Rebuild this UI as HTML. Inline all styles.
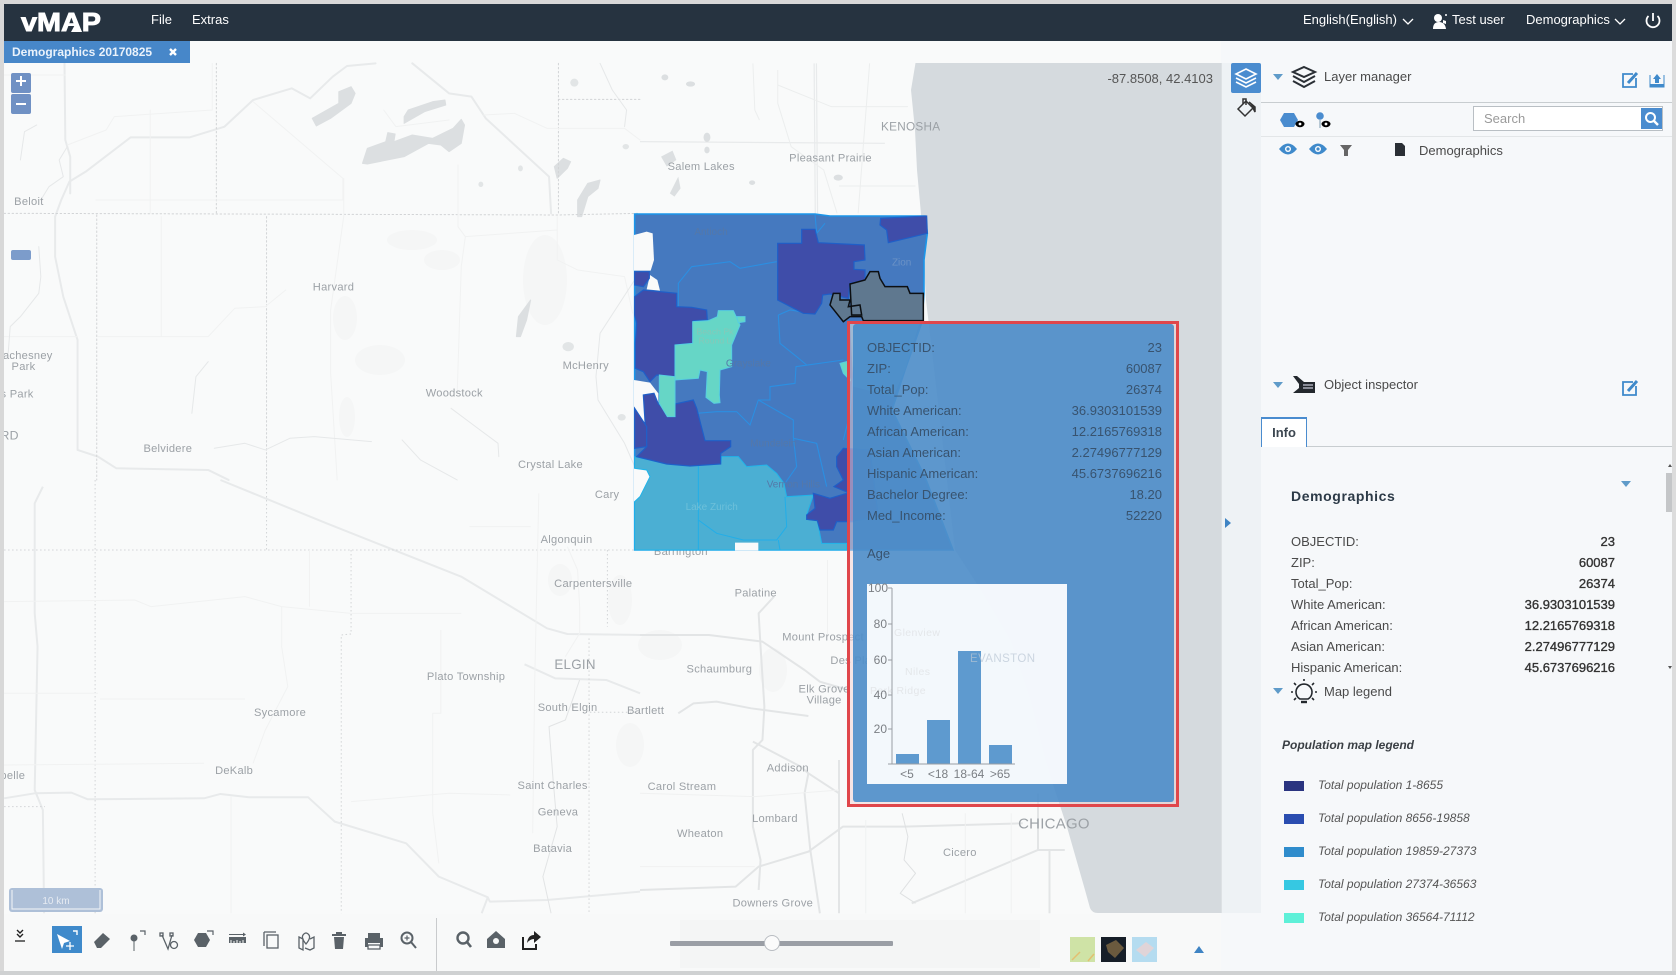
<!DOCTYPE html>
<html><head><meta charset="utf-8"><title>vMAP</title>
<style>
html,body{margin:0;padding:0;width:1676px;height:975px;overflow:hidden;background:#f6f8fa;font-family:"Liberation Sans",Arial,sans-serif;font-size:13px;color:#4a4a4a}
.a{position:absolute;white-space:nowrap;line-height:16px}
.r{position:absolute;display:flex;justify-content:space-between;line-height:16px;white-space:nowrap}
.pn .r{left:1291px;width:324px}
.pn b{font-weight:400;color:#333;-webkit-text-stroke:.35px #333}
.pp .r{left:867px;width:295px;color:#38536f}
.it{font-style:italic;font-size:12px;left:1318px;color:#555}
.sw{position:absolute;left:1284px;width:20px;height:10px}
#map .n path{vector-effect:non-scaling-stroke}
#map text{font-family:"Liberation Sans",Arial,sans-serif}
</style></head><body>
<svg id="map" width="1676" height="975" viewBox="0 0 1676 975" style="position:absolute;left:0;top:0">
<rect width="1676" height="975" fill="#f9fafa"/>
<!-- urban patches -->
<g fill="#f5f6f6">
<ellipse cx="345" cy="318" rx="12" ry="22"/><ellipse cx="347" cy="417" rx="8" ry="20"/><ellipse cx="412" cy="240" rx="25" ry="10"/><ellipse cx="545" cy="280" rx="22" ry="45"/><ellipse cx="442" cy="260" rx="18" ry="10"/><ellipse cx="380" cy="360" rx="25" ry="15"/>
<ellipse cx="620" cy="600" rx="12" ry="25"/><ellipse cx="560" cy="580" rx="12" ry="16"/><ellipse cx="630" cy="745" rx="14" ry="22"/>
<ellipse cx="773" cy="670" rx="14" ry="22"/><ellipse cx="660" cy="645" rx="22" ry="15"/>
</g>
<!-- lake -->
<path fill="#d5dade" d="M915.5,63 L911,90 L915,130 L917,170 L921,214 L926,300 L940,420 L955,550 L977,584 L1010,640 L1030,700 L1045,760 L1067,827 L1085,890 L1090,908 Q1092,913 1098,913 L1221,913 L1221,63 Z"/>
<!-- Z9 region -->
<g class="n" transform="translate(0,60) scale(.4082,.3333)" fill="none" stroke-linejoin="round" stroke-linecap="round">
<g fill="#dcdfe1" stroke="#dcdfe1" stroke-width="1">
<path d="M765,175 L830,130 L830,95 L860,80 L870,100 L860,130 L810,175 L775,198Z"/>
<path d="M990,170 L1000,150 L1060,125 L1090,120 L1092,135 L1040,155 L990,190Z"/>
<path d="M888,310 L900,265 L945,245 L950,218 L968,222 L965,245 L1010,225 L1060,235 L1110,205 L1130,178 L1138,195 L1130,250 L1100,275 L1080,255 L1050,250 L990,290 L900,312Z"/>
<path d="M1415,470 L1415,420 L1440,370 L1470,360 L1465,385 L1440,410 L1425,470Z"/>
<path d="M1358,320 L1380,295 L1398,305 L1390,325 L1365,355Z"/>
<path d="M1265,830 L1270,770 L1300,720 L1290,780 L1275,830Z"/>
</g>
<g fill="#e2e5e6"><ellipse cx="1407" cy="68" rx="10" ry="12"/><ellipse cx="1275" cy="325" rx="6" ry="9"/><ellipse cx="1178" cy="373" rx="6" ry="8"/><ellipse cx="1392" cy="860" rx="14" ry="14"/><ellipse cx="1533" cy="260" rx="8" ry="8"/><ellipse cx="1523" cy="1072" rx="10" ry="10"/></g>
<g stroke="#e8eaeb" stroke-width="2">
<path d="M920,10 L850,18 L815,50 L760,115 L715,85 L620,120 L550,200 L465,232 L320,232 L210,335 L170,365 L150,420 L135,470 L135,590 L155,710 L190,840 L190,1170 L240,1190 L285,1225 L510,1230 L560,1260"/>
<path d="M1010,10 L1100,100 L1155,110 L1190,175 L1345,350 L1350,460"/>
<path d="M158,10 L160,240 L172,290 L172,400"/>
</g>
<g stroke="#d2d4d6" stroke-width="1" stroke-dasharray="1.5 2.5">
<path d="M10,460 L1368,465 L1568,460"/><path d="M237,465 V1260"/><path d="M530,10 V465"/><path d="M653,470 V1260"/><path d="M1368,10 V460"/><path d="M1368,118 H1568"/><path d="M1558,470 V1000"/>
</g>
<g stroke="#f1f2f2" stroke-width="1">
<path d="M235,420 L840,420 L840,355 L620,125"/><path d="M368,150 V460"/><path d="M395,470 V830"/><path d="M842,355 V470 L810,750 V940 L826,1260"/><path d="M1122,315 V500 L1140,530 L1130,620 L1120,1000"/><path d="M1365,470 V600 L1415,630 L1530,650 L1550,760"/><path d="M240,830 H510 L575,745 L650,740 L700,690"/><path d="M1140,530 L1365,510"/><path d="M1185,165 L1260,160 L1340,205 H1530 L1568,240"/><path d="M10,45 H160"/><path d="M10,830 H190"/><path d="M940,150 L970,200 L1100,180"/><path d="M165,255 L260,210 L280,170 L520,150 V10"/>
</g>
<g stroke="#e6e8e9" stroke-width="1">
<path d="M1105,1045 L1165,1100 L1220,1150 L1222,1190"/><path d="M525,1165 L600,1150 L650,1170 L710,1135 L770,1130 L910,1145"/><path d="M470,1060 L480,950 L510,905"/><path d="M985,1140 L1030,1200 L1120,1260"/><path d="M50,300 L60,215 L90,195"/><path d="M165,260 L145,300 L155,350 L120,380 L100,420"/><path d="M95,560 L100,650 L95,700 L50,770 L25,800 L20,880"/><path d="M1460,950 L1465,1020 L1530,1150 L1555,1220"/><path d="M1470,10 L1500,90 L1535,150 L1530,200"/><path d="M1560,650 L1470,820 L1460,950"/>
</g>
</g>
<!-- Z10 region -->
<g class="n" transform="translate(0,480) scale(.4082,.3333)" fill="none" stroke-linejoin="round">
<g stroke="#e8eaeb" stroke-width="2">
<path d="M540,0 L800,130 L1130,290 L1340,445 L1390,462 L1568,465"/>
<path d="M105,20 L85,70 V400 L92,500 L85,930 L105,990 L108,1300"/>
<path d="M10,955 L85,940 L175,938 L215,958 L500,955 L540,942 L610,952 L755,952 L820,1025 L995,1090 L1075,1190 L1195,1252 L1200,1265 L1340,1260 L1568,1235"/>
<path d="M1285,553 L1360,595 L1485,600 L1568,640"/><path d="M1195,1252 L1180,1300"/>
</g>
<g stroke="#d2d4d6" stroke-width="1" stroke-dasharray="1.5 2.5">
<path d="M10,210 H1568"/><path d="M233,0 V1300"/><path d="M653,0 V210"/><path d="M860,210 V462 L836,465 V1300"/><path d="M1443,475 V1300"/><path d="M1488,210 V440"/><path d="M10,980 H110"/><path d="M1445,697 H1568"/>
</g>
<g stroke="#f1f2f2" stroke-width="1">
<path d="M690,380 V500 L705,620 L650,750 L620,850"/><path d="M245,657 H600"/><path d="M10,640 H240"/><path d="M10,365 L330,360 L370,380 L600,350 L690,380 L860,400 H1130"/><path d="M758,210 V380"/><path d="M860,965 L1100,940 L1250,945"/><path d="M10,855 L500,850"/><path d="M1080,450 V700 H1060 V1000 L1075,1150"/><path d="M566,950 V1300"/><path d="M1150,140 H1300"/><path d="M1320,40 L1310,600 L1305,1060"/><path d="M1390,200 L1415,270 L1420,380 L1420,460 L1385,530"/>
</g>
<path stroke="#e2e4e5" d="M1420,600 L1385,720 L1345,740 L1355,900 L1365,1040 L1330,1190 L1350,1300"/>
</g>
<!-- Z11 region -->
<g class="n" transform="translate(640,60) scale(.3827,.3333)" fill="none">
<g stroke="#e8eaeb" stroke-width="1.2"><path d="M455,10 L458,460"/><path d="M461,10 L464,460"/><path d="M0,245 L640,250"/></g>
<g stroke="#eceeee"><path d="M600,10 L570,460"/><path d="M295,10 L300,150 L312,180"/><path d="M360,30 V130 L395,260 L480,330 L515,460"/><path d="M360,75 L500,140 H700"/><path d="M520,378 H720"/></g>
<g fill="#dcdfe1"><path d="M55,290 L85,272 L95,300 L70,320Z"/><path d="M78,400 L100,350 L106,385 L90,410Z"/><ellipse cx="175" cy="232" rx="9" ry="14"/><ellipse cx="175" cy="270" rx="7" ry="10"/><ellipse cx="518" cy="353" rx="12" ry="9"/><ellipse cx="293" cy="368" rx="8" ry="7"/><ellipse cx="65" cy="52" rx="9" ry="9"/><ellipse cx="132" cy="72" rx="12" ry="8"/></g>
</g>
<!-- Z12 region -->
<g class="n" transform="translate(640,560) scale(.3827,.3333)" fill="none" stroke-linejoin="round">
<g stroke="#e3e5e6" stroke-width="2">
<path d="M0,225 L180,225 L320,245 L430,330 L470,365 L545,390"/>
<path d="M350,110 L310,160 L315,260 L325,440 L320,540 L295,570 V800 L315,900 L310,990"/>
<path d="M0,990 L250,980 L310,920 L440,875 L530,800 L690,800 L1000,790"/>
<path d="M520,600 V1060"/><path d="M440,640 L430,700 L445,870 L470,1060"/>
<path d="M295,545 L420,620 L440,640 L520,700"/>
<path d="M710,1030 L1040,870 H1110"/><path d="M1040,700 V870"/><path d="M1070,870 V1060"/>
<path d="M100,460 L140,430 L200,425 L290,445 L440,468"/>
</g>
<g stroke="#f0f1f1">
<path d="M0,700 L300,710 L520,690"/><path d="M0,920 L300,920"/><path d="M590,780 V1060"/><path d="M850,760 V1060"/><path d="M970,760 V1060"/><path d="M490,0 V230"/>
</g>
<path stroke="#dfe1e2" d="M685,760 L700,830 L690,900 L720,940 L680,1000 L720,1030"/>
</g>
<!-- map labels -->
<g transform="scale(1.0689)" font-size="10.4" fill="#9ca1a6" text-anchor="middle" letter-spacing=".25">
<text x="852" y="122" font-size="11">KENOSHA</text><text x="656" y="159">Salem Lakes</text><text x="777" y="151">Pleasant Prairie</text><text x="27" y="192">Beloit</text><text x="312" y="272">Harvard</text><text x="26" y="336">achesney</text><text x="22" y="346">Park</text><text x="16" y="372">s Park</text><text x="9" y="411" font-size="11.5">RD</text><text x="157" y="423">Belvidere</text><text x="548" y="345">McHenry</text><text x="425" y="371">Woodstock</text><text x="515" y="438">Crystal Lake</text><text x="568" y="466">Cary</text><text x="530" y="508">Algonquin</text><text x="555" y="549">Carpentersville</text><text x="707" y="558">Palatine</text><text x="770" y="599">Mount Prospect</text><text x="538" y="626" font-size="12.5">ELGIN</text><text x="436" y="636">Plato Township</text><text x="673" y="629">Schaumburg</text><text x="531" y="665">South Elgin</text><text x="604" y="668">Bartlett</text><text x="771" y="648">Elk Grove</text><text x="771" y="658">Village</text><text x="262" y="670">Sycamore</text><text x="219" y="724">DeKalb</text><text x="737" y="722">Addison</text><text x="517" y="738">Saint Charles</text><text x="638" y="739">Carol Stream</text><text x="522" y="763">Geneva</text><text x="725" y="769">Lombard</text><text x="655" y="783">Wheaton</text><text x="517" y="797">Batavia</text><text x="898" y="801">Cicero</text><text x="986" y="775" font-size="14">CHICAGO</text><text x="723" y="848">Downers Grove</text><text x="637" y="519">Barrington</text><text x="12" y="729">pelle</text><text x="806" y="621">Des Plaines</text>
</g>
<!-- choropleth -->
<g class="n" transform="translate(630,200) scale(.33333)">
<path fill="#4579bf" stroke="#1b96ea" stroke-width="1.6" d="M14,42 L555,42 L600,48 L885,48 L892,100 L882,180 L882,280 L876,366 L825,510 L786,630 L885,831 L969,1050 L14,1050Z"/>
<path fill="#4ba3d6" d="M660,365 L870,365 L825,510 L790,590 L670,560Z"/>
<!-- white notches under the dark polygons -->
<g fill="#f9fafa">
<path d="M12,105 L50,95 L68,100 L72,180 L62,212 H12Z"/><path d="M60,225 L82,240 L90,272 L50,268Z"/>
<path d="M12,540 L60,548 L85,580 V610 L85,650 L50,690 L12,620Z"/>
<path d="M12,805 L50,810 L60,830 L30,890 L12,905Z"/>
</g>
<!-- light -->
<path fill="#4bafd3" stroke="#20b4ea" stroke-width="1" d="M14,905 L30,890 L60,830 L50,810 L14,805 V770 L110,792 L180,798 L272,792 L275,770 L325,770 L350,800 L410,795 L440,820 L462,850 L470,890 L550,885 L530,945 L530,958 L562,962 L575,1030 L650,1030 V1050 H14Z"/>
<path fill="none" stroke="#22aee8" stroke-width="1" d="M205,795 V1050 M205,960 L260,1000 L340,1020 L440,1020 L470,980 L465,890 M450,1050 L445,1020"/>
<path fill="#f9fafa" d="M315,1028 H385 V1052 H315Z"/>
<!-- lines -->
<g fill="none" stroke="#2b8fe2" stroke-width="1.1">
<path d="M145,320 V250 L185,200 L300,185 L330,205 L440,185"/>
<path d="M200,640 L260,635 L320,635 L360,675 L385,600 H420 V560 L495,550 L498,500 L640,480"/>
<path d="M445,345 L480,330 L555,342 M445,345 L450,430 L500,470 L530,495"/>
<path d="M385,600 L490,660 V710 L500,800 L465,850"/><path d="M490,715 L560,730 L590,860"/><path d="M555,42 L560,100 L585,70"/>
<path d="M672,500 L660,640 L640,720"/>
</g>
<!-- dark -->
<g fill="#3f4da9" stroke="#1f5fc8" stroke-width="1.2">
<path d="M443,130 H515 V88 H555 L565,128 L703,135 L705,180 L672,185 V208 L705,210 V240 L660,250 L655,295 L600,282 L578,285 L575,310 L555,342 L520,340 L443,300Z"/>
<path d="M752,55 L890,48 L892,100 L850,110 L775,128 L770,90 L750,75Z"/>
<path d="M14,215 H58 V235 L40,260 L14,255Z"/>
<path d="M40,270 L140,280 V320 L185,322 L230,330 L232,360 L190,362 L188,430 L135,435 V530 L80,525 L60,545 L40,515 L16,505 V430 L20,370 L14,345 V290Z"/>
<path d="M40,585 L72,580 L85,612 L135,650 V612 L190,600 L200,625 L225,722 H302 V740 L272,760 V792 L180,798 L110,792 L20,770 L50,740 L48,710Z"/>
<path d="M14,625 L50,680 V740 L14,745Z"/>
<path d="M550,880 L600,895 L650,880 L670,880 V965 L620,965 L610,990 L570,990 L562,962 L530,958 V945 L555,925Z"/>
<path d="M620,770 L640,745 L720,750 L745,950 L660,965 L660,880 L612,860 L640,840 L620,800Z"/>
</g>
<!-- teal -->
<g fill="#66d6c6" stroke="#56cfe0" stroke-width="1">
<path d="M188,365 L235,362 L262,350 L265,332 H310 L330,375 L305,435 V500 L270,510 L268,585 L270,608 L252,610 L228,592 L232,515 L210,510 L205,535 L135,540 V435 L188,430Z"/>
<path d="M88,525 L135,530 V650 H112 L88,610Z"/>
<path d="M320,350 H345 V365 L325,368Z"/><path d="M630,490 L650,485 L660,540 L640,520Z"/>
</g>
<!-- selected -->
<path fill="#5f788f" stroke="#0c0f12" stroke-width="1.5" d="M660,252 L705,240 L720,215 H745 L750,235 L765,260 H832 L840,280 H880 V362 H700 L695,350 L660,350 L640,365 L600,315 L610,280 H630 V300 L660,300 L655,320 L690,315 L695,345 L665,345Z"/>
<!-- label on polygons -->
<g font-size="30" fill="#5578a8" text-anchor="middle" stroke="none">
<text x="243" y="105">Antioch</text><text x="815" y="197" fill="#6b92c6">Zion</text><text x="355" y="500">Grayslake</text><text x="430" y="740">Mundelein</text><text x="490" y="862">Vernon Hills</text><text x="245" y="930" fill="#6dc0da">Lake Zurich</text>
<text x="255" y="403" font-size="26" fill="#86c8b8">Beach Pk</text><text x="255" y="431" font-size="26" fill="#86c8b8">Round L</text>
</g>
</g>
<!-- toolbar background -->
<rect x="4" y="914" width="1218" height="58" fill="#f8f9f9"/>
<rect x="680" y="920" width="360" height="48" fill="#f4f5f5"/>
<!-- popup -->
<rect x="848.5" y="322.5" width="329" height="483" fill="#f4d0d0" opacity=".5"/>
<rect x="853" y="324" width="321" height="478" rx="3" fill="rgb(63,136,200)" fill-opacity=".84"/>
<rect x="848.5" y="322.5" width="329" height="483" fill="none" stroke="#e0464b" stroke-width="3"/>
<rect x="867" y="584" width="200" height="200" fill="#fff" fill-opacity=".93"/>
<g font-size="10.5" fill="#e4e7ea" letter-spacing=".4"><text x="894" y="636">Glenview</text><text x="905" y="675">Niles</text><text x="870" y="694">Park Ridge</text></g>
<g fill="#5e9acf"><rect x="896" y="754" width="23" height="10"/><rect x="927" y="720" width="23" height="44"/><rect x="958" y="651" width="23" height="113"/><rect x="989" y="745" width="23" height="19"/></g>
<text x="970" y="662" font-size="11.5" fill="#b9c6d4" fill-opacity=".7" letter-spacing=".4">EVANSTON</text>
<g stroke="#9a9ea3" fill="none"><path d="M892,588 V764 M888,764 H1015 M888,588 H892 M888,624 H892 M888,660 H892 M888,695 H892 M888,729 H892"/></g>
<g font-size="12" fill="#7b7f84" text-anchor="end"><text x="888" y="592">100</text><text x="887" y="628">80</text><text x="887" y="664">60</text><text x="887" y="699">40</text><text x="887" y="733">20</text></g>
<g font-size="12" fill="#7b7f84" text-anchor="middle"><text x="907" y="778">&lt;5</text><text x="938" y="778">&lt;18</text><text x="969" y="778">18-64</text><text x="1000" y="778">&gt;65</text></g>
<!-- strip & panel -->
<rect x="1221" y="41" width="455" height="931" fill="#f6f8fa"/>
<rect x="1221" y="63" width="40" height="850" fill="#eef2f5"/>
<rect x="1221" y="63" width="1" height="850" fill="#dde1e4"/>
<rect x="1231" y="63" width="30" height="30" rx="2" fill="#4a8ccf"/>
<g transform="translate(1246,78)" fill="none" stroke="#fff" stroke-width="1.6"><path d="M0,-9 L10,-4 L0,1 L-10,-4Z"/><path d="M-10,0 L0,5 L10,0"/><path d="M-10,4 L0,9 L10,4"/></g>
<!-- paint bucket -->
<g transform="translate(1246,108)" fill="none" stroke="#333" stroke-width="1.5"><path d="M-8,1 L0,-7 L7,0 L-1,8Z"/><path d="M-3,-4 V-9 H0 V-3"/><path d="M3,-6 L9,-1 L9,4 L7,0" fill="#333"/></g>
<rect x="1261" y="102" width="411" height="1" fill="#c8cdd0"/>
<rect x="1261" y="136" width="411" height="1" fill="#e3e6e8"/>
<rect x="1307" y="446" width="365" height="1" fill="#c8cdd0"/>
<!-- triangles -->
<g fill="#5f9bc9"><path d="M1273,74 H1283 L1278,80Z"/><path d="M1273,382 H1283 L1278,388Z"/><path d="M1273,688 H1283 L1278,694Z"/><path d="M1621,481 H1631 L1626,487Z"/></g>
<path d="M1225,518 L1231,523 L1225,528Z" fill="#3f84c4"/>
<!-- layers icon -->
<g transform="translate(1304,77)" fill="none" stroke="#2a2f35" stroke-width="2"><path d="M0,-10 L11,-5 L0,0 L-11,-5Z"/><path d="M-11,-1 L0,5 L11,-1"/><path d="M-11,4 L0,10 L11,4"/></g>
<!-- edit icons -->
<g transform="translate(1630,80)" fill="none" stroke="#3f8acb" stroke-width="1.8"><path d="M3,-6 H-7 V7 H6 V-2"/><path d="M-2,3 L7,-7" stroke-width="3"/></g>
<g transform="translate(1630,388)" fill="none" stroke="#3f8acb" stroke-width="1.8"><path d="M3,-6 H-7 V7 H6 V-2"/><path d="M-2,3 L7,-7" stroke-width="3"/></g>
<!-- upload -->
<g transform="translate(1657,80)"><path d="M-7,-5 V7 H7 V-5" fill="none" stroke="#3f8acb" stroke-width="1"/><path d="M0,-6 L4,-1 H2 V3 H-2 V-1 H-4Z" fill="#3f8acb"/><rect x="-7" y="4" width="14" height="3" fill="#3f8acb"/></g>
<!-- hex + eye -->
<path d="M1284,113 H1294 L1298,120 L1294,127 H1284 L1280,120Z" fill="#4a8ccf"/>
<g transform="translate(1300,124)"><ellipse rx="4.5" ry="3.2" fill="#000"/><circle r="1.4" fill="#fff"/></g>
<circle cx="1320" cy="116" r="3.8" fill="#4a8ccf"/><path d="M1320,120 V128" stroke="#7a9ab0" stroke-width="1"/>
<g transform="translate(1326,124)"><ellipse rx="4.5" ry="3.2" fill="#000"/><circle r="1.4" fill="#fff"/></g>
<!-- eyes -->
<g><g transform="translate(1288,149)"><path d="M-9,0 Q0,-11 9,0 Q0,11 -9,0Z" fill="#3f8acb"/><circle r="3" fill="#fff"/><circle r="1.6" fill="#3f8acb"/></g><g transform="translate(1318,149)"><path d="M-9,0 Q0,-11 9,0 Q0,11 -9,0Z" fill="#3f8acb"/><circle r="3" fill="#fff"/><circle r="1.6" fill="#3f8acb"/></g></g>
<path d="M1340,145 H1352 L1348,150 V156 H1344 V150Z" fill="#666"/>
<path d="M1395,143 H1402 L1405,146 V156 H1395Z" fill="#2a2f35"/>
<!-- inspector icon -->
<g transform="translate(1304,385)" fill="#23282d"><path d="M-11,-9 L-7,-9 L0,-3 H11 V8 H-11 L-5,3 L-5,-1Z"/><path d="M-1,0 H9 M-1,3 H9" stroke="#eef" stroke-width="1"/></g>
<!-- bulb -->
<g transform="translate(1304,692)" fill="none" stroke="#23282d" stroke-width="1.6"><path d="M-4,7 A8,8 0 1 1 4,7Z"/><path d="M-3,10 H3" stroke-width="2.4"/><path d="M0,-13 V-11 M-10,-9 L-8,-7 M10,-9 L8,-7 M-13,0 H-11 M13,0 H11 M-10,8 L-8,6 M10,8 L8,6"/></g>
<!-- scrollbar -->
<rect x="1666" y="473" width="6" height="39" fill="#c4c6c8"/>
<path d="M1668,467 L1670,464 L1672,467Z M1668,666 L1670,669 L1672,666Z" fill="#555"/>
<!-- outer borders -->
<rect x="0" y="0" width="1676" height="4" fill="#d8d8d8"/><rect x="0" y="0" width="4" height="975" fill="#d8d8d8"/><rect x="1672" y="0" width="4" height="975" fill="#dcdcdc"/><rect x="0" y="971" width="1676" height="4" fill="#cfd1d2"/>
<!-- header -->
<rect x="4" y="4" width="1668" height="37" fill="#263340"/>
<text x="21" y="31" font-size="26" font-weight="bold" fill="#fff" stroke="#fff" stroke-width=".9" textLength="80" lengthAdjust="spacingAndGlyphs">vMAP</text>
<path d="M68,26 H78 L76,32 H70Z" fill="#263340"/><path d="M71,32 L77,21 L82,32Z" fill="#fff"/>
<path d="M1403,19 L1408,24 L1413,19 M1615,19 L1620,24 L1625,19" fill="none" stroke="#fff" stroke-width="1.3"/>
<g fill="#fff"><circle cx="1438" cy="18" r="4"/><path d="M1433,29 Q1433,22 1439,22 Q1445,22 1446,29Z"/><path d="M1443,20 l3,1 v3 l-3,-1Z"/><circle cx="1446" cy="15" r="1"/></g>
<g fill="none" stroke="#fff" stroke-width="1.8"><path d="M1648.5,16 A6.5,6.5 0 1 0 1657.5,16"/><path d="M1653,13 V21"/></g>
<!-- tab -->
<rect x="4" y="41" width="186" height="22" fill="#4787c9"/>
<path d="M170,49 L176,55 M176,49 L170,55" stroke="#fff" stroke-width="2.4"/>
<!-- zoom controls -->
<rect x="11" y="73" width="20" height="20" rx="2" fill="#7091c4"/><rect x="11" y="94" width="20" height="20" rx="2" fill="#7091c4"/>
<path d="M16,81 H26 M21,76 V86 M16,104 H26" stroke="#fff" stroke-width="2"/>
<rect x="11" y="250" width="20" height="10" rx="2" fill="#7c9ccb"/>
<!-- scale -->
<rect x="9" y="888" width="94" height="24" rx="3" fill="#aec0d8"/>
<path d="M12,890 V909 H100 V890" fill="none" stroke="#f4f6f8"/>
<text x="56" y="904" font-size="10" fill="#e6ebf2" text-anchor="middle">10 km</text>
<!-- toolbar icons -->
<g transform="translate(20,936)"><path d="M-3,-6 L0,-3 L3,-6 M-3,-2 L0,1 L3,-2" fill="none" stroke="#222" stroke-width="1.4"/><path d="M-5,5 H5" stroke="#222" stroke-width="1.3"/></g>
<rect x="52" y="926" width="30" height="27" fill="#3f8acb"/>
<path d="M57,934 L70,941 L64,943 L62,949Z" fill="#fff"/><path d="M70,942 V950 M66,946 H74" stroke="#fff" stroke-width="1.3"/><path d="M73,931 H77 V935" fill="none" stroke="#fff" stroke-width="1.4"/>
<g fill="#5a6268">
<path d="M94,942 L103,933 L110,939 L101,948 L97,948Z"/>
<circle cx="134" cy="938" r="3.5"/><path d="M133.5,941 H134.5 V951 H133.5Z"/>
<path d="M194,940 L198,933 H206 L210,940 L206,947 H198Z"/>
<path d="M229,937 H246 V943 H229Z"/>
<path d="M332,934 H346 V936 H332Z"/><path d="M334,937 H344 L343,949 H335Z"/><path d="M336,932 H342 V934 H336Z"/>
</g>
<path d="M229,934.5 H245" stroke="#5a6268" stroke-width="1"/><path d="M243,932.5 L246,934.5 L243,936.5Z" fill="#5a6268"/>
<path d="M231,940 V943 M234,941 V943 M237,940 V943 M240,941 V943 M243,940 V943" stroke="#f8f9f9" stroke-width="1"/>
<path d="M140,931 H145 V935 M207,931 H213 V935" fill="none" stroke="#5a6268" stroke-width="1.2"/>
<g fill="none" stroke="#5a6268" stroke-width="1.3">
<path d="M162,935 L168,949 L172,935"/><circle cx="174" cy="945" r="3.5"/><rect x="160" y="933" width="3" height="3"/><rect x="170" y="933" width="3" height="3"/>
<rect x="267" y="935" width="11" height="13"/><path d="M264,932 H276 M264,932 V946"/>
<path d="M299,937 L303,939 V950 L299,948Z M310,939 L314,937 V948 L310,950 L305,948"/><path d="M306,944 Q301,938 303,935 Q306,931 309,935 Q311,938 306,944Z"/>
</g>
<g fill="#5a6268"><path d="M368,938 V933 H380 V938 H383 V947 H380 V943 H368 V947 H365 V938Z"/><rect x="368" y="945" width="12" height="4" fill="none" stroke="#5a6268" stroke-width="1.3"/></g>
<g fill="none" stroke="#5a6268" stroke-width="2"><circle cx="407" cy="938" r="5.5"/><path d="M411,942 L416,948"/><circle cx="463" cy="938" r="5.5" stroke-width="2.4"/><path d="M467,942 L471,947" stroke-width="2.6"/></g>
<path d="M404.5,938 H409.5 M407,935.5 V940.5" stroke="#5a6268" stroke-width="1.2"/>
<rect x="436" y="918" width="1" height="53" fill="#c9cbcd"/>
<path d="M496,931 L505,939 V948 H487 V939Z" fill="#5a6268"/><circle cx="496" cy="941" r="3" fill="#f7f8f8"/>
<path d="M523,937 V949 H536 V944" fill="none" stroke="#222" stroke-width="2"/><path d="M527,943 Q528,935 534,935 V931 L541,937 L534,943 V939 Q530,939 527,943Z" fill="#222"/>
<!-- slider -->
<rect x="670" y="941" width="223" height="5" rx="1" fill="#9a9ea5"/>
<circle cx="772" cy="943" r="7.5" fill="#fbfbfb" stroke="#b9bdc2"/>
<!-- thumbnails -->
<rect x="1070" y="937" width="25" height="25" fill="#cfe3a6"/><path d="M1072,960 L1080,952 M1088,961 L1094,954" stroke="#e3c070" stroke-width="1.5"/>
<rect x="1101" y="937" width="25" height="25" fill="#161e28"/><path d="M1106,945 L1116,940 L1124,948 L1115,958 L1108,952Z" fill="#6b5a3e"/>
<rect x="1132" y="937" width="25" height="25" fill="#b5dcf0"/><path d="M1136,950 L1146,942 L1154,948 L1145,957Z" fill="#e0d4d8"/>
<path d="M1194,953 L1199,946 L1204,953Z" fill="#3f84c4"/>
</svg>
<!-- text overlays -->
<div class="a" style="left:151px;top:12px;color:#fff">File</div>
<div class="a" style="left:192px;top:12px;color:#fff">Extras</div>
<div class="a" style="left:1303px;top:12px;color:#fff">English(English)</div>
<div class="a" style="left:1452px;top:12px;color:#fff">Test user</div>
<div class="a" style="left:1526px;top:12px;color:#fff">Demographics</div>
<div class="a" style="left:12px;top:44px;color:#eaf2fb;font-weight:bold;font-size:12px">Demographics 20170825</div>
<div class="a" style="right:463px;top:71px;color:#555">-87.8508, 42.4103</div>
<div class="pp">
<div class="r" style="top:340px"><span>OBJECTID:</span><span>23</span></div>
<div class="r" style="top:361px"><span>ZIP:</span><span>60087</span></div>
<div class="r" style="top:382px"><span>Total_Pop:</span><span>26374</span></div>
<div class="r" style="top:403px"><span>White American:</span><span>36.9303101539</span></div>
<div class="r" style="top:424px"><span>African American:</span><span>12.2165769318</span></div>
<div class="r" style="top:445px"><span>Asian American:</span><span>2.27496777129</span></div>
<div class="r" style="top:466px"><span>Hispanic American:</span><span>45.6737696216</span></div>
<div class="r" style="top:487px"><span>Bachelor Degree:</span><span>18.20</span></div>
<div class="r" style="top:508px"><span>Med_Income:</span><span>52220</span></div>
<div class="r" style="top:546px"><span>Age</span></div>
</div>
<div class="a" style="left:1324px;top:69px">Layer manager</div>
<div style="position:absolute;left:1473px;top:106px;width:168px;height:23px;background:#fff;border:1px solid #b9bfc4;line-height:23px;color:#9a9a9a;text-indent:10px;font-size:13px">Search</div>
<div style="position:absolute;left:1641px;top:106px;width:22px;height:25px;background:#fff;border:1px solid #b9bfc4;box-sizing:border-box;border-left:0"></div>
<svg width="21" height="21" style="position:absolute;left:1641px;top:108px"><rect width="21" height="21" fill="#4a8ccf"/><circle cx="9.5" cy="9.5" r="4.5" fill="none" stroke="#fff" stroke-width="2"/><path d="M13,13 L17,17" stroke="#fff" stroke-width="2.4"/></svg>
<div class="a" style="left:1419px;top:143px">Demographics</div>
<div class="a" style="left:1324px;top:377px">Object inspector</div>
<div style="position:absolute;left:1261px;top:417px;width:46px;height:30px;box-sizing:border-box;background:#fff;border:1px solid #4a8ccf;border-bottom:0;border-top-width:2px;font-weight:bold;line-height:28px;text-align:center;color:#3c4650">Info</div>
<div class="a" style="left:1291px;top:488px;font-weight:bold;font-size:14px;letter-spacing:.6px;color:#2c3a47">Demographics</div>
<div class="pn">
<div class="r" style="top:534px"><span>OBJECTID:</span><b>23</b></div>
<div class="r" style="top:555px"><span>ZIP:</span><b>60087</b></div>
<div class="r" style="top:576px"><span>Total_Pop:</span><b>26374</b></div>
<div class="r" style="top:597px"><span>White American:</span><b>36.9303101539</b></div>
<div class="r" style="top:618px"><span>African American:</span><b>12.2165769318</b></div>
<div class="r" style="top:639px"><span>Asian American:</span><b>2.27496777129</b></div>
<div class="r" style="top:660px"><span>Hispanic American:</span><b>45.6737696216</b></div>
</div>
<div class="a" style="left:1324px;top:684px">Map legend</div>
<div class="a" style="left:1282px;top:737px;font-weight:bold;font-style:italic;font-size:12px;color:#3a3f44">Population map legend</div>
<div class="sw" style="top:781px;background:#2a3480"></div><div class="a it" style="top:777px">Total population 1-8655</div>
<div class="sw" style="top:814px;background:#2a4db0"></div><div class="a it" style="top:810px">Total population 8656-19858</div>
<div class="sw" style="top:847px;background:#2f8ccc"></div><div class="a it" style="top:843px">Total population 19859-27373</div>
<div class="sw" style="top:880px;background:#36c8e2"></div><div class="a it" style="top:876px">Total population 27374-36563</div>
<div class="sw" style="top:913px;background:#5ef0d8"></div><div class="a it" style="top:909px">Total population 36564-71112</div>
</body></html>
